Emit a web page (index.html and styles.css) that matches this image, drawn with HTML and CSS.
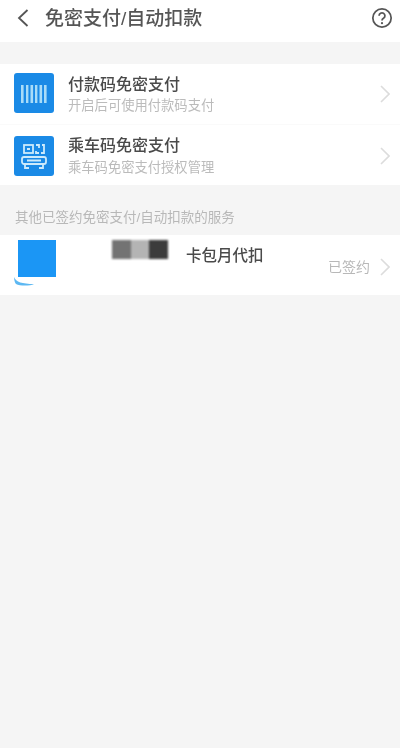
FILE: index.html
```html
<!DOCTYPE html>
<html lang="zh">
<head>
<meta charset="utf-8">
<title>免密支付/自动扣款</title>
<link rel="stylesheet" href="styles.css">
</head>
<body>
<header class="nav">
  <svg class="back" viewBox="0 0 14 20" width="14" height="20"><path d="M11.5 2 3 10l8.500 8" fill="none" stroke="#555" stroke-width="1.800"/></svg>
  <h1 class="nav-title">免密支付/自动扣款</h1>
  <svg class="help" viewBox="0 0 24 24" width="22" height="22"><circle cx="12" cy="12" r="10" fill="none" stroke="#555" stroke-width="1.900"/><path d="M8.800 9.500a3.200 3.200 0 1 1 4.800 2.800c-1 .6-1.600 1.200-1.600 2.500" fill="none" stroke="#555" stroke-width="1.900"/><circle cx="12" cy="17.600" r="1.200" fill="#555"/></svg>
</header>
<div class="spacer"></div>
<section class="list">
  <div class="row row-pay">
    <div class="app-icon">
      <svg viewBox="0 0 40 40" width="40" height="40"><g fill="#a9dcf8"><rect x="7" y="12" width="2.600" height="18"/><rect x="12" y="12" width="2.400" height="18"/><rect x="16.500" y="12" width="2.600" height="18"/><rect x="21" y="12" width="2.400" height="18"/><rect x="25.500" y="12" width="2.600" height="18"/><rect x="30" y="12" width="2.600" height="18"/></g></svg>
    </div>
    <div class="text">
      <div class="title">付款码免密支付</div>
      <div class="sub">开启后可使用付款码支付</div>
    </div>
    <svg class="chev" viewBox="0 0 10 18" width="10" height="18"><path d="M1 1l8 8-8 8" fill="none" stroke="#dcdcdc" stroke-width="1.600"/></svg>
  </div>
  <div class="row row-ride">
    <div class="app-icon">
      <svg viewBox="0 0 40 40" width="40" height="40"><g fill="none" stroke="#cdeafb" stroke-width="1.800"><rect x="10" y="9" width="9" height="8"/><path d="M22 9h3v3M28 9h2v8h-3M22 15v2h3"/><rect x="8" y="21" width="24" height="7" rx="2"/><path d="M11 28v4h4M29 28v4h-4M13 24.500h14"/></g><rect x="13" y="12" width="3" height="2" fill="#cdeafb"/></svg>
    </div>
    <div class="text">
      <div class="title">乘车码免密支付</div>
      <div class="sub">乘车码免密支付授权管理</div>
    </div>
    <svg class="chev" viewBox="0 0 10 18" width="10" height="18"><path d="M1 1l8 8-8 8" fill="none" stroke="#dcdcdc" stroke-width="1.600"/></svg>
  </div>
</section>
<div class="section-label">其他已签约免密支付/自动扣款的服务</div>
<section class="signed">
  <div class="signed-logo">
    <div class="logo-square"></div>
    <svg class="logo-tail" viewBox="0 0 20 9" width="20" height="9"><path d="M0 0c2 5 8 7 20 7-4 2-14 2-18 0C1 6 0 3 0 0z" fill="#5db8f2"/></svg>
  </div>
  <div class="mosaic">
    <span class="m m1"></span><span class="m m2"></span><span class="m m3"></span>
  </div>
  <div class="signed-name">卡包月代扣</div>
  <div class="status">已签约</div>
  <svg class="chev" viewBox="0 0 10 18" width="10" height="18"><path d="M1 1l8 8-8 8" fill="none" stroke="#dcdcdc" stroke-width="1.600"/></svg>
</section>
</body>
</html>
```
FILE: styles.css
```css
* { box-sizing: border-box; }
html, body { margin: 0; height: 100%; }
body {
  background: #f5f5f5;
  font-family: "Liberation Sans", "Noto Sans CJK SC", sans-serif;
  color: #444;
}
.nav {
  height: 42px;
  background: #fff;
  display: flex;
  align-items: center;
  padding: 0 7px 6px 16px;
}
.back { flex: none; filter: blur(.5px); }
.nav-title {
  margin: 0 0 3px 15px;
  flex: 1;
  font-size: 19px;
  font-weight: 500;
  color: #555;
  filter: blur(.6px);
}
.help { flex: none; filter: blur(.4px); }
.spacer { height: 22px; }
.list { background: #fff; }
.row {
  display: flex;
  align-items: center;
  padding: 0 10px 0 14px;
}
.row-pay { height: 60px; }
.row-pay .app-icon { margin-bottom: 2px; }
.row-ride {
  height: 61px;
  padding-top: 2px;
  border-top: 1px solid #fafafa;
}
.row-ride .sub { margin-top: 2px; }
.app-icon {
  width: 40px;
  height: 40px;
  flex: none;
  background: #1a8ae6;
  border-radius: 3px;
  filter: blur(.5px);
}
.app-icon svg { display: block; }
.text { flex: 1; margin-left: 14px; filter: blur(.6px); }
.title { font-size: 16px; line-height: 22px; font-weight: 500; color: #4a4a4a; }
.sub { font-size: 13.300px; line-height: 18px; margin-top: 1px; color: #bbb; }
.chev { flex: none; filter: blur(.5px); }
.section-label {
  height: 50px;
  padding: 25px 0 0 15px;
  font-size: 13.500px;
  line-height: 16px;
  color: #b8b8b8;
  filter: blur(.6px);
}
.signed {
  height: 60px;
  background: #fff;
  display: flex;
  align-items: flex-start;
  padding: 0 10px 0 14px;
}
.signed-logo { width: 42px; flex: none; padding-top: 5px; filter: blur(.6px); }
.logo-square {
  width: 38px;
  height: 37px;
  margin-left: 4px;
  background: #1b96f5;
}
.logo-tail { display: block; }
.mosaic {
  display: flex;
  width: 56px;
  height: 19px;
  margin: 5px 0 0 56px;
  flex: none;
  filter: blur(.8px);
}
.m { flex: 1; }
.m1 { background: #737373; }
.m2 { background: #b4b4b4; }
.m3 { background: #3c3c3c; }
.signed-name {
  margin: 11px 0 0 18px;
  flex: 1;
  font-size: 15.500px;
  line-height: 20px;
  font-weight: 500;
  color: #4a4a4a;
  filter: blur(.5px);
}
.status {
  margin-top: 22px;
  font-size: 14px;
  line-height: 20px;
  color: #b8b8b8;
  filter: blur(.6px);
}
.signed .chev { margin: 23px 0 0 10px; }
```
